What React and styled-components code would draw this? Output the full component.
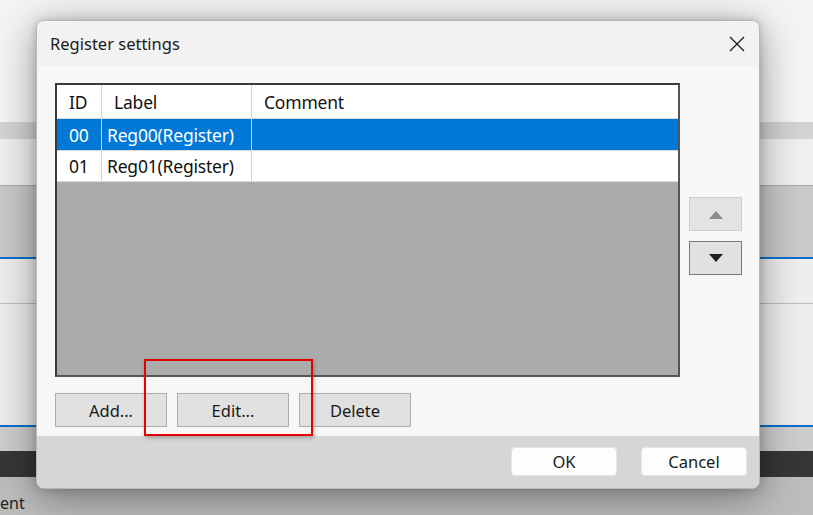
import React from 'react';
import styled, { createGlobalStyle } from 'styled-components';

const GlobalStyle = createGlobalStyle`
  html, body {
    margin: 0;
    padding: 0;
    width: 813px;
    height: 515px;
    overflow: hidden;
    font-family: "Noto Sans", "Open Sans", sans-serif;
  }
`;

const Screen = styled.div`
  position: relative;
  width: 813px;
  height: 515px;
  overflow: hidden;
  display: flex;
  flex-direction: column;
  background: #f3f3f3;
`;

const Band = styled.div`
  flex: none;
  height: ${(p) => p.h}px;
  background: ${(p) => p.bg};
  border-top: ${(p) => (p.line ? `1px solid ${p.line}` : 'none')};
`;

const StatusBand = styled.div`
  flex: 1;
  background: #bdbdbd;
  display: flex;
  align-items: flex-end;
  padding-bottom: 1px;
  font-size: 16px;
  color: #222;
`;

const Dialog = styled.div`
  position: absolute;
  left: 36px;
  top: 20px;
  width: 724px;
  height: 469px;
  display: flex;
  flex-direction: column;
  background: #f5f5f5;
  border: 1px solid #b8b8b8;
  box-sizing: border-box;
  border-radius: 8px;
  overflow: hidden;
  box-shadow: 0 8px 40px rgba(0, 0, 0, 0.4), 0 0 10px rgba(0, 0, 0, 0.18);
`;

const TitleBar = styled.div`
  height: 45px;
  display: flex;
  align-items: center;
  justify-content: space-between;
  padding: 0 14px 0 13px;
  background: #f2f2f2;
  font-size: 16.5px;
  color: #1a1a1a;
`;

const Body = styled.div`
  flex: 1;
  display: flex;
  flex-direction: column;
  padding: 17px 0 0 18px;
  background: #f7f7f7;
`;

const TopRow = styled.div`
  display: flex;
  gap: 9px;
`;

const TableFrame = styled.div`
  width: 625px;
  height: 294px;
  box-sizing: border-box;
  border: 2px solid #3a3a3a;
  border-right-color: #555;
  border-bottom-color: #555;
  background: #ababab;
  display: flex;
  flex-direction: column;
`;

const Row = styled.div`
  display: grid;
  grid-template-columns: 45px 150px 1fr;
  box-sizing: border-box;
  height: ${(p) => p.h}px;
  background: ${(p) => (p.selected ? '#0078d7' : '#ffffff')};
  color: ${(p) => (p.selected ? '#ffffff' : '#111')};
  border-bottom: 1px solid #d9d9d9;
  font-size: 17.5px;
  letter-spacing: -0.2px;
`;

const Cell = styled.div`
  display: flex;
  align-items: center;
  padding-left: ${(p) => p.pl || 12}px;
  border-right: 1px solid #d4d4d4;
  white-space: nowrap;
  overflow: hidden;
  &:last-child {
    border-right: none;
  }
`;

const ArrowColumn = styled.div`
  display: flex;
  flex-direction: column;
  gap: 10px;
  padding-top: 114px;
`;

const ArrowButton = styled.div`
  width: 53px;
  height: 34px;
  box-sizing: border-box;
  display: flex;
  align-items: center;
  justify-content: center;
  background: ${(p) => (p.disabled ? '#e3e3e3' : '#e1e1e1')};
  border: 1px solid ${(p) => (p.disabled ? '#cdcdcd' : '#7a7a7a')};
`;

const ButtonRow = styled.div`
  display: flex;
  gap: 10px;
  margin-top: 16px;
`;

const ClassicButton = styled.div`
  width: 112px;
  height: 34px;
  box-sizing: border-box;
  display: flex;
  align-items: center;
  justify-content: center;
  background: #e1e1e1;
  border: 1px solid #adadad;
  font-size: 16.5px;
  color: #1a1a1a;
`;

const Footer = styled.div`
  height: 52px;
  display: flex;
  align-items: flex-start;
  justify-content: flex-end;
  gap: 24px;
  padding: 11px 12px 0 0;
  box-sizing: border-box;
  background: #d6d6d6;
`;

const ModernButton = styled.div`
  width: 106px;
  height: 29px;
  box-sizing: border-box;
  display: flex;
  align-items: center;
  justify-content: center;
  background: #fdfdfd;
  border: 1px solid #e6e6e6;
  border-radius: 4px;
  font-size: 16.5px;
  color: #1a1a1a;
`;

const Highlight = styled.div`
  position: absolute;
  left: 107px;
  top: 338px;
  width: 169px;
  height: 77px;
  box-sizing: border-box;
  border: 2px solid #e60000;
  box-shadow: 1px 2px 4px rgba(0, 0, 0, 0.25);
  pointer-events: none;
`;

const Triangle = ({ up, color }) => (
  <svg width="16" height="9" viewBox="0 0 16 9">
    <path d={up ? 'M1 9 L8 1 L15 9 Z' : 'M1 0 L8 8 L15 0 Z'} fill={color} />
  </svg>
);

const CloseIcon = () => (
  <svg width="16" height="16" viewBox="0 0 16 16">
    <path d="M1 1 L15 15 M15 1 L1 15" stroke="#1a1a1a" strokeWidth="1.3" fill="none" />
  </svg>
);

const rows = [
  { id: '00', label: 'Reg00(Register)', selected: true, h: 32 },
  { id: '01', label: 'Reg01(Register)', h: 31 },
];

export default function App() {
  return (
    <>
      <GlobalStyle />
      <Screen>
        <Band h={122} bg="#f4f4f4" />
        <Band h={17} bg="#d3d3d3" />
        <Band h={46} bg="#f0f0f0" />
        <Band h={71} bg="#c9c9c9" line="#aaaaaa" />
        <Band h={2} bg="#0a6fcc" />
        <Band h={44} bg="#eeeeee" />
        <Band h={121} bg="#ededed" line="#bdbdbd" />
        <Band h={2} bg="#0a6fcc" />
        <Band h={24} bg="#cdcdcd" />
        <Band h={26} bg="#363636" />
        <StatusBand>ent</StatusBand>

        <Dialog>
          <TitleBar>
            <span>Register settings</span>
            <CloseIcon />
          </TitleBar>
          <Body>
            <TopRow>
              <TableFrame>
                <Row h={34}>
                  <Cell>ID</Cell>
                  <Cell>Label</Cell>
                  <Cell>Comment</Cell>
                </Row>
                {rows.map((r) => (
                  <Row key={r.id} h={r.h} selected={r.selected}>
                    <Cell>{r.id}</Cell>
                    <Cell pl={5}>{r.label}</Cell>
                    <Cell />
                  </Row>
                ))}
              </TableFrame>
              <ArrowColumn>
                <ArrowButton disabled>
                  <Triangle up color="#8c8c8c" />
                </ArrowButton>
                <ArrowButton>
                  <Triangle color="#1e1e1e" />
                </ArrowButton>
              </ArrowColumn>
            </TopRow>
            <ButtonRow>
              <ClassicButton>Add...</ClassicButton>
              <ClassicButton>Edit...</ClassicButton>
              <ClassicButton>Delete</ClassicButton>
            </ButtonRow>
          </Body>
          <Footer>
            <ModernButton>OK</ModernButton>
            <ModernButton>Cancel</ModernButton>
          </Footer>
          <Highlight />
        </Dialog>
      </Screen>
    </>
  );
}
